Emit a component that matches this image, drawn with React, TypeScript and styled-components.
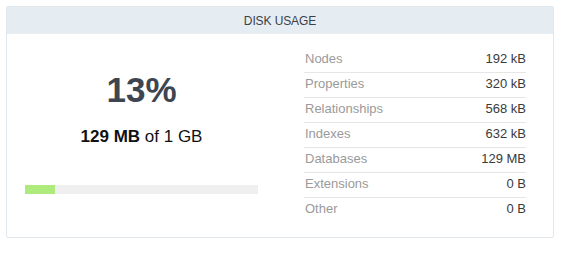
import React from "react";
import styled, { createGlobalStyle } from "styled-components";

const Global = createGlobalStyle`
  html, body { margin: 0; padding: 0; background: #ffffff; }
  body { font-family: "Liberation Sans", Arial, sans-serif; }
`;

const Page = styled.div`
  padding: 6px;
`;

const Panel = styled.section`
  width: 548px;
  box-sizing: border-box;
  border: 1px solid #e1e8ed;
  border-radius: 2px;
  background: #fff;
`;

const Header = styled.header`
  height: 27px;
  background: #e5edf3;
  display: flex;
  align-items: center;
  justify-content: center;
  font-size: 12px;
  color: #3b4148;
  letter-spacing: -0.1px;
`;

const Body = styled.div`
  display: grid;
  grid-template-columns: 269px 1fr;
  padding: 14px 0 14px;
`;

const Summary = styled.div`
  padding: 23px 18px 0;
  display: flex;
  flex-direction: column;
  align-items: center;
`;

const Percent = styled.div`
  font-size: 35px;
  line-height: 37px;
  font-weight: bold;
  color: #3d4650;
`;

const Usage = styled.div`
  margin-top: 19px;
  font-size: 17px;
  line-height: 20px;
  color: #111;
  b { font-weight: bold; }
`;

const Track = styled.div`
  margin-top: 38px;
  align-self: stretch;
  height: 9px;
  background: #efefef;
`;

const Fill = styled.div`
  height: 100%;
  background: #aeea7c;
`;

const Stats = styled.div`
  padding: 0 27px 0 28px;
`;

const Row = styled.div<{ $last?: boolean }>`
  height: 21px;
  padding-bottom: 3px;
  display: flex;
  align-items: center;
  justify-content: space-between;
  font-size: 13px;
  border-bottom: 1px solid ${(p) => (p.$last ? "transparent" : "#e6e6e6")};
`;

const Label = styled.span`
  color: #9a9a9a;
  padding-left: 1px;
`;

const Value = styled.span`
  color: #3a3a3a;
`;

const rows: [string, string][] = [
  ["Nodes", "192 kB"],
  ["Properties", "320 kB"],
  ["Relationships", "568 kB"],
  ["Indexes", "632 kB"],
  ["Databases", "129 MB"],
  ["Extensions", "0 B"],
  ["Other", "0 B"],
];

export default function App() {
  const pct = 13;
  return (
    <>
      <Global />
      <Page>
        <Panel>
          <Header>DISK USAGE</Header>
          <Body>
            <Summary>
              <Percent>{pct}%</Percent>
              <Usage>
                <b>129 MB</b> of 1 GB
              </Usage>
              <Track>
                <Fill style={{ width: `${pct}%` }} />
              </Track>
            </Summary>
            <Stats>
              {rows.map(([l, v], i) => (
                <Row key={l} $last={i === rows.length - 1}>
                  <Label>{l}</Label>
                  <Value>{v}</Value>
                </Row>
              ))}
            </Stats>
          </Body>
        </Panel>
      </Page>
    </>
  );
}
